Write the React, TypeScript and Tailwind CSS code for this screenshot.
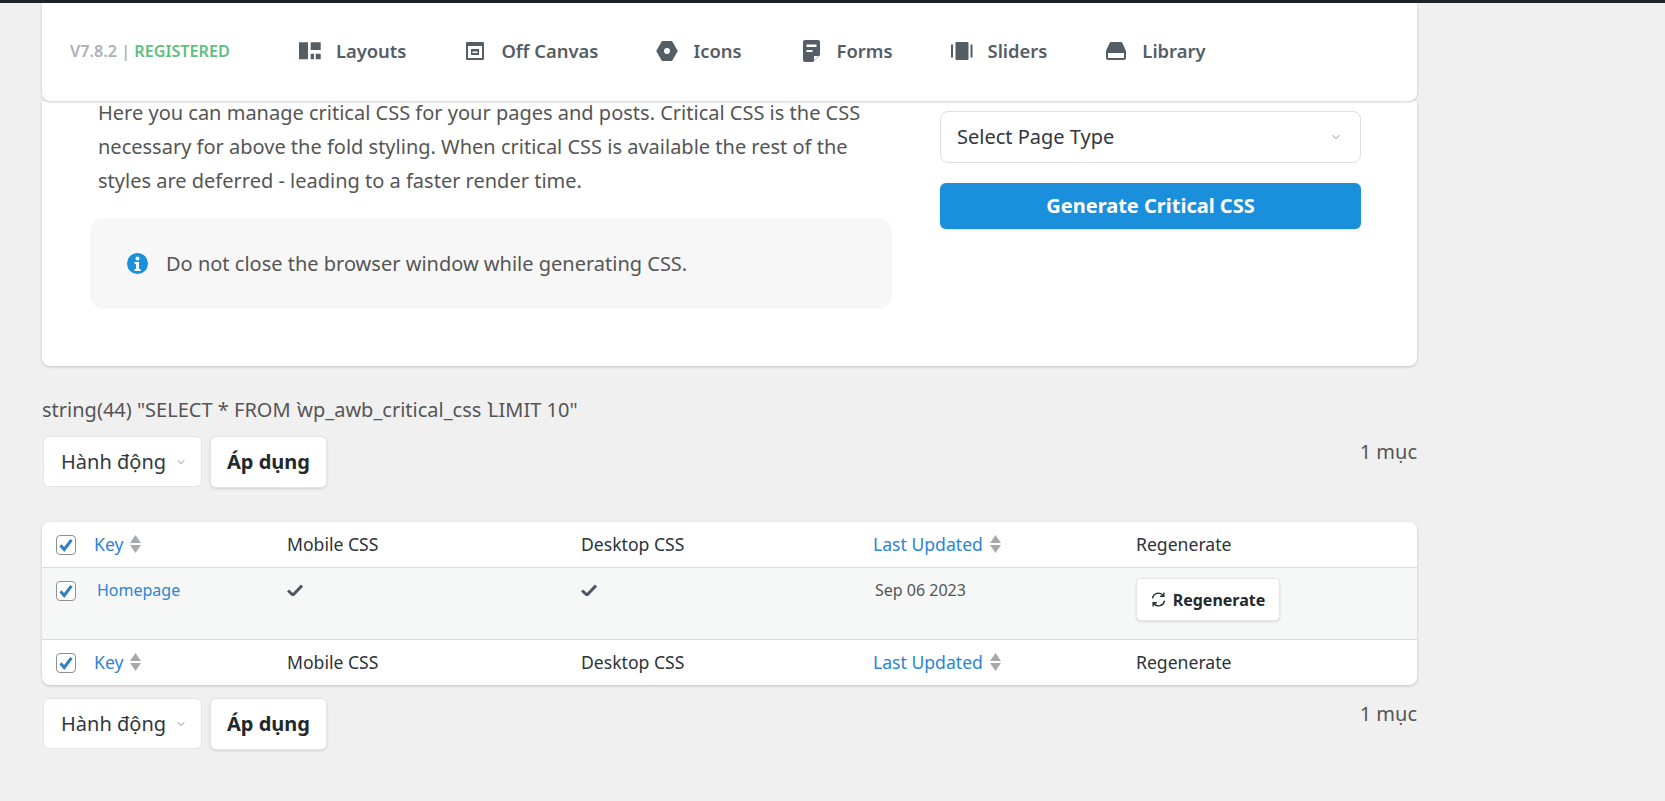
import { ChevronDown } from "lucide-react";

const sortIcon = (
  <svg width="11" height="18" viewBox="0 0 11 18" className="ml-[7px] shrink-0">
    <path d="M5.500 0L11 8H0z" fill="#a7aaad" />
    <path d="M5.500 18L0 10h11z" fill="#a7aaad" />
  </svg>
);

function Check() {
  return (
    <span className="flex h-[20px] w-[20px] items-center justify-center rounded-[4px] border-[1.5px] border-[#8c8f94] bg-white">
      <svg width="16" height="16" viewBox="0 0 16 16">
        <path d="M2.500 8.200L6.200 12.500L13.500 2.800" fill="none" stroke="#2f7fc1" strokeWidth="3" />
      </svg>
    </span>
  );
}

function NavIcon(props: { name: string }) {
  const c = "#555d66";
  const paths: Record<string, React.ReactElement> = {
    layouts: <path d="M0 2.300h9v17H0zM11.700 2.300h10V10h-10zM11.700 13.700H15v5.600h-3.300zM16.700 13.700h5v5.600h-5z" fill={c} />,
    offcanvas: (
      <>
        <path fillRule="evenodd" d="M3 2h16a1 1 0 0 1 1 1v16a1 1 0 0 1-1 1H3a1 1 0 0 1-1-1V3a1 1 0 0 1 1-1zM4 6v12h14V6z" fill={c} />
        <path fillRule="evenodd" d="M7 9h8v6H7zM8.500 11.500v1.500h5v-1.500z" fill={c} />
      </>
    ),
    icons: (
      <path fillRule="evenodd" stroke={c} strokeWidth="1.500" strokeLinejoin="round" d="M6.300 1.800h9.400L21 11l-5.300 9.200H6.300L1 11zM11 7.200a3.800 3.800 0 1 0 0 7.600a3.800 3.800 0 0 0 0-7.600z" fill={c} />
    ),
    forms: (
      <path fillRule="evenodd" d="M5 0h13a2 2 0 0 1 2 2v13l-7 7H5a2 2 0 0 1-2-2V2a2 2 0 0 1 2-2zM6.500 4.500v2.500h10V4.500zM6.500 10v2h6v-2zM14 16v4.500l4.500-4.500z" fill={c} />
    ),
    sliders: <path d="M5.500 2h11a1 1 0 0 1 1 1v16a1 1 0 0 1-1 1h-11a1 1 0 0 1-1-1V3a1 1 0 0 1 1-1zM0 4.500h2v13H0zM19.500 4.500h2v13h-2z" fill={c} />,
    library: (
      <path fillRule="evenodd" d="M6 2h10c.6 0 1 .3 1.300.8L21 11v7a2 2 0 0 1-2 2H3a2 2 0 0 1-2-2v-7l3.700-8.200C5 2.300 5.400 2 6 2zM3 13v4.500c0 .3.200.5.500.5h15c.3 0 .5-.2.5-.5V13z" fill={c} />
    ),
  };
  return (
    <svg width="22" height="22" viewBox="0 0 22 22" className="shrink-0">
      {paths[props.name]}
    </svg>
  );
}

const navItems = [
  { name: "layouts", label: "Layouts" },
  { name: "offcanvas", label: "Off Canvas" },
  { name: "icons", label: "Icons" },
  { name: "forms", label: "Forms" },
  { name: "sliders", label: "Sliders" },
  { name: "library", label: "Library" },
];

const rowClass = "grid grid-cols-[52px_193px_294px_292px_263px_1fr]";

function HeadRow() {
  return (
    <div className={`${rowClass} h-[45px] items-center text-[17.6px] text-[#2c3338]`}>
      <div className="pl-[14px]">
        <Check />
      </div>
      <div className="flex items-center text-[#2a84d8]">Key{sortIcon}</div>
      <div>Mobile CSS</div>
      <div>Desktop CSS</div>
      <div className="flex items-center text-[#2a84d8]">Last Updated{sortIcon}</div>
      <div>Regenerate</div>
    </div>
  );
}

function BulkBar() {
  return (
    <div className="flex items-start justify-between">
      <div className="flex gap-[8px] pl-px">
        <div className="flex h-[51px] w-[159px] items-center rounded-[6px] border border-[#e5e5e5] bg-white pl-[17px] text-[20px] text-[#32373c]">
          Hành động
          <ChevronDown size={12} color="#8c8f94" className="ml-[9px]" />
        </div>
        <div className="flex h-[52px] w-[117px] items-center justify-center rounded-[6px] border border-[#e5e5e5] bg-white text-[20px] font-bold text-[#23282d] shadow-sm">
          Áp dụng
        </div>
      </div>
      <div className="pt-[1px] text-[20px] text-[#555]">1 mục</div>
    </div>
  );
}

export default function App() {
  return (
    <div className="min-h-[801px] bg-[#f0f0f0] font-['Noto_Sans',sans-serif]">
      <div className="h-[3px] bg-[#1d2327]" />
      <div className="w-[1417px] pb-[40px] pl-[42px]">
        <div className="relative z-10 flex h-[98px] items-center gap-[58px] rounded-b-[8px] bg-white pb-[2px] pl-[28px] shadow-[0_1px_3px_rgba(0,0,0,0.2)]">
          <div className="mr-[11px] text-[16.2px] font-semibold text-[#aeb1b4]">
            V7.8.2 | <span className="text-[#5fbf7f]">REGISTERED</span>
          </div>
          {navItems.map((item) => (
            <div key={item.name} className="flex items-center gap-[15px] text-[18.4px] font-semibold text-[#555d66]">
              <NavIcon name={item.name} />
              {item.label}
            </div>
          ))}
        </div>

        <div className="flex h-[265px] rounded-b-[8px] bg-white shadow-[0_1px_3px_rgba(0,0,0,0.2)]">
          <div className="w-[850px] pl-[48px]">
            <p className="-mt-[5px] pl-[8px] text-[20px] leading-[34px] text-[#555]">
              Here you can manage critical CSS for your pages and posts. Critical CSS is the CSS
              necessary for above the fold styling. When critical CSS is available the rest of the
              styles are deferred - leading to a faster render time.
            </p>
            <div className="mt-[20px] flex h-[91px] w-[802px] items-center rounded-[14px] bg-[#f7f7f7] pl-[37px] text-[20px] text-[#555]">
              <svg width="21" height="21" viewBox="0 0 21 21" className="mr-[18px] shrink-0">
                <circle cx="10.500" cy="10.500" r="10.500" fill="#1a8fdc" />
                <circle cx="10.500" cy="5.500" r="2" fill="#fff" />
                <path d="M7.500 9h4.500v7h1.500v2h-6v-2h1.500v-5h-1.500z" fill="#fff" />
              </svg>
              Do not close the browser window while generating CSS.
            </div>
          </div>
          <div className="ml-[48px] w-[421px] pt-[10px]">
            <div className="flex h-[52px] items-center justify-between rounded-[8px] border border-[#e0e0e0] pl-[16px] pr-[18px] text-[20px] text-[#32373c]">
              Select Page Type
              <ChevronDown size={12} color="#8c8f94" />
            </div>
            <div className="mt-[20px] flex h-[46px] items-center justify-center rounded-[6px] bg-[#1a8fdc] text-[20px] font-bold text-white shadow-sm">
              Generate Critical CSS
            </div>
          </div>
        </div>

        <div className="mt-[29px] text-[20px] leading-[30px] text-[#555]">
          string(44) "SELECT * FROM <span className="inline-block w-[1.5px]">`</span>wp_awb_critical_css <span className="inline-block w-[1.5px]">`</span>LIMIT 10"
        </div>
        <div className="mt-[11px]">
          <BulkBar />
        </div>

        <div className="mt-[34px] overflow-hidden rounded-[8px] bg-white shadow-[0_1px_3px_rgba(0,0,0,0.2)]">
          <HeadRow />
          <div className={`${rowClass} h-[73px] border-y border-[#dcdcde] bg-[#f6f7f7] text-[#555]`}>
            <div className="pl-[14px] pt-[13px]">
              <Check />
            </div>
            <div className="pl-[3px] pt-[10px] text-[16px] text-[#2a84d8]">Homepage</div>
            <div className="pt-[16px]">
              <svg width="16" height="12" viewBox="0 0 16 12">
                <path d="M1 6.500L6 11L15 1.500" fill="none" stroke="#50575e" strokeWidth="3" />
              </svg>
            </div>
            <div className="pt-[16px]">
              <svg width="16" height="12" viewBox="0 0 16 12">
                <path d="M1 6.500L6 11L15 1.500" fill="none" stroke="#50575e" strokeWidth="3" />
              </svg>
            </div>
            <div className="pl-[2px] pt-[10px] text-[16px]">Sep 06 2023</div>
            <div className="pt-[10px]">
              <div className="flex h-[43px] w-[144px] items-center justify-center rounded-[5px] border border-[#e5e5e5] bg-white text-[16px] font-bold text-[#23282d] shadow-sm">
                <svg width="15" height="15" viewBox="0 0 14 14" className="mr-[7px]" fill="none" stroke="#23282d" strokeWidth="1.300">
                  <path d="M1.500 6A5.500 5.500 0 0 1 11.500 3.500M12.500 8A5.500 5.500 0 0 1 2.500 10.500" />
                  <path d="M12 .5v3.500H8.500M2 13.500V10h3.500" />
                </svg>
                Regenerate
              </div>
            </div>
          </div>
          <HeadRow />
        </div>

        <div className="mt-[13px]">
          <BulkBar />
        </div>
      </div>
    </div>
  );
}
